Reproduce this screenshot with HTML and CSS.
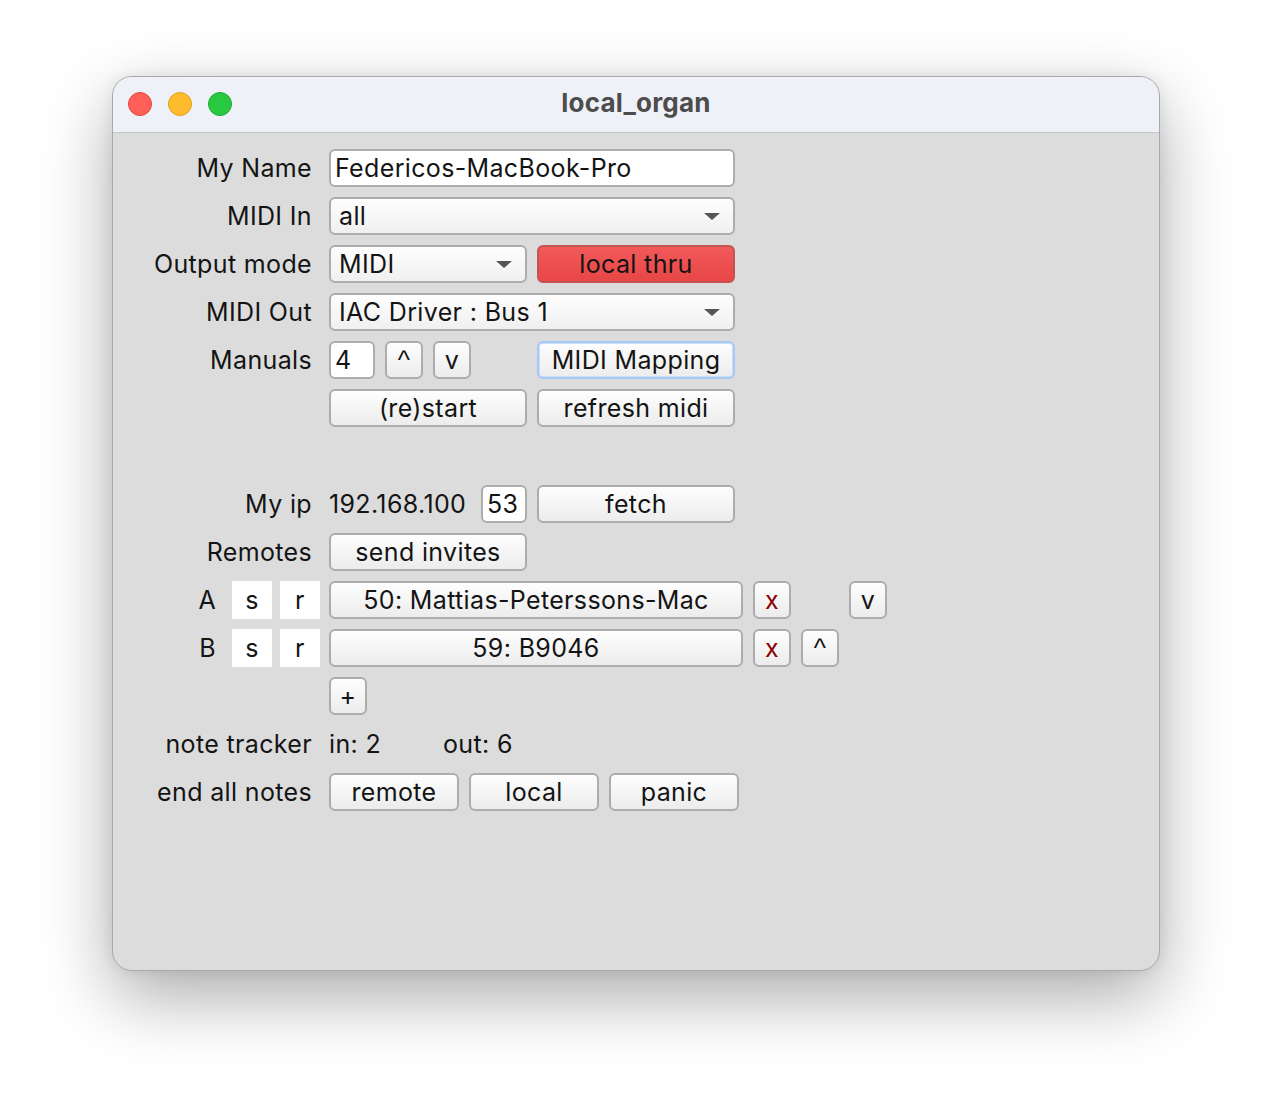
FILE: index.html
```html
<!DOCTYPE html>
<html>
<head>
<meta charset="utf-8">
<title>local_organ</title>
<link rel="stylesheet" href="styles.css">
</head>
<body>
<div class="window">
  <div class="titlebar">
    <div class="lights">
      <span class="light red"></span>
      <span class="light yellow"></span>
      <span class="light green"></span>
    </div>
    <div class="title">local_organ</div>
  </div>
  <div class="content">
    <div class="form">
      <div class="label">My Name</div>
      <div class="ctrls"><div class="field w406">Federicos-MacBook-Pro</div></div>

      <div class="label">MIDI In</div>
      <div class="ctrls"><div class="combo w406">all<span class="arrow"></span></div></div>

      <div class="label">Output mode</div>
      <div class="ctrls">
        <div class="combo w198">MIDI<span class="arrow"></span></div>
        <div class="btn w198 red">local thru</div>
      </div>

      <div class="label">MIDI Out</div>
      <div class="ctrls"><div class="combo w406">IAC Driver : Bus 1<span class="arrow"></span></div></div>

      <div class="label">Manuals</div>
      <div class="ctrls">
        <div class="field w46">4</div>
        <div class="btn w38 caret">^</div>
        <div class="btn w38">v</div>
        <div class="btn w198 focus push">MIDI Mapping</div>
      </div>

      <div class="label"></div>
      <div class="ctrls">
        <div class="btn w198">(re)start</div>
        <div class="btn w198">refresh midi</div>
      </div>

      <div class="spacer"></div>

      <div class="label">My ip</div>
      <div class="ctrls">
        <div class="text ip">192.168.100</div>
        <div class="field w46">53</div>
        <div class="btn w198">fetch</div>
      </div>

      <div class="label">Remotes</div>
      <div class="ctrls"><div class="btn w198">send invites</div></div>

      <div class="label remote"><span>A</span><span class="box">s</span><span class="box">r</span></div>
      <div class="ctrls">
        <div class="btn w414">50: Mattias-Peterssons-Mac</div>
        <div class="btn w38 del">x</div>
        <div class="slot"></div>
        <div class="btn w38">v</div>
      </div>

      <div class="label remote"><span>B</span><span class="box">s</span><span class="box">r</span></div>
      <div class="ctrls">
        <div class="btn w414">59: B9046</div>
        <div class="btn w38 del">x</div>
        <div class="btn w38 caret">^</div>
      </div>

      <div class="label"></div>
      <div class="ctrls"><div class="btn w38">+</div></div>

      <div class="label">note tracker</div>
      <div class="ctrls">
        <div class="text in">in: 2</div>
        <div class="text">out: 6</div>
      </div>

      <div class="label">end all notes</div>
      <div class="ctrls">
        <div class="btn w130">remote</div>
        <div class="btn w130">local</div>
        <div class="btn w130">panic</div>
      </div>
    </div>
  </div>
</div>
</body>
</html>
```

FILE: styles.css
```css
* { box-sizing: border-box; }

html, body {
  margin: 0;
  background: #ffffff;
}

body {
  min-height: 1120px;
  padding: 76px 0 0 112px;
  font-family: Inter, "Noto Sans", "Liberation Sans", sans-serif;
  font-size: 25px;
  letter-spacing: 0.35px;
  color: #141414;
}

.window {
  width: 1048px;
  height: 895px;
  border-radius: 20px;
  border: 1px solid #a9a9a9;
  background: #dcdcdc;
  overflow: hidden;
  box-shadow: 0 26px 70px rgba(0, 0, 0, 0.33), 0 0 14px rgba(0, 0, 0, 0.08);
  display: flex;
  flex-direction: column;
}

.titlebar {
  height: 56px;
  flex: none;
  background: #eef1f8;
  border-bottom: 1px solid #c4c4c4;
  display: flex;
  align-items: center;
  position: relative;
}

.lights {
  display: flex;
  gap: 16px;
  padding-left: 15px;
  margin-top: -2px;
}

.light {
  width: 24px;
  height: 24px;
  border-radius: 50%;
  display: block;
}
.light.red { background: #ff5f57; border: 1px solid #e2463f; }
.light.yellow { background: #febc2e; border: 1px solid #e1a116; }
.light.green { background: #28c840; border: 1px solid #1aab29; }

.title {
  position: absolute;
  left: 0;
  right: 0;
  top: 10px;
  text-align: center;
  font-size: 26px;
  font-weight: 700;
  letter-spacing: 0.2px;
  color: #4c4c4c;
  pointer-events: none;
}

.content {
  padding-top: 16px;
}

.form {
  display: grid;
  grid-template-columns: 207px 1fr;
  grid-auto-rows: 38px;
  column-gap: 9px;
  row-gap: 10px;
}

.label {
  display: flex;
  align-items: center;
  justify-content: flex-end;
  padding-right: 8px;
  white-space: nowrap;
}

.label.remote {
  padding-right: 0;
}
.label.remote > span:first-child {
  margin-right: 16px;
}
.box {
  width: 40px;
  height: 38px;
  background: #ffffff;
  display: flex;
  align-items: center;
  justify-content: center;
  margin-left: 8px;
}
.label.remote .box:nth-child(2) { margin-left: 0; }

.spacer {
  grid-column: 1 / -1;
}

.ctrls {
  display: flex;
  align-items: center;
  gap: 10px;
}

.field,
.btn,
.combo {
  height: 38px;
  border: 2px solid #adadad;
  border-radius: 6px;
  display: flex;
  align-items: center;
  white-space: nowrap;
}

.field {
  background: #ffffff;
  padding-left: 4px;
}

.btn {
  justify-content: center;
  background: linear-gradient(#fefefe, #ececec);
}

.btn.caret {
  font-family: "Liberation Sans", Arial, sans-serif;
  font-size: 26px;
}

.combo {
  background: linear-gradient(#fefefe, #f0f0f0);
  padding-left: 8px;
  position: relative;
}

.arrow {
  position: absolute;
  right: 13px;
  top: 14px;
  width: 0;
  height: 0;
  border-left: 8px solid transparent;
  border-right: 8px solid transparent;
  border-top: 7px solid #555555;
}

.btn.red {
  background: linear-gradient(#f25959, #e84646);
  border-color: #c45353;
}

.btn.focus {
  border: 2px solid #a3c9f4;
  box-shadow: inset 0 0 0 1px #c8dffa;
}

.push { margin-left: 56px; }

.del { color: #8b0000; }

.slot { width: 38px; height: 38px; }

.text { white-space: nowrap; }
.ip { width: 142px; }
.in { width: 104px; }

.w38 { width: 38px; }
.w46 { width: 46px; }
.w130 { width: 130px; }
.w198 { width: 198px; }
.w406 { width: 406px; }
.w414 { width: 414px; }
```
